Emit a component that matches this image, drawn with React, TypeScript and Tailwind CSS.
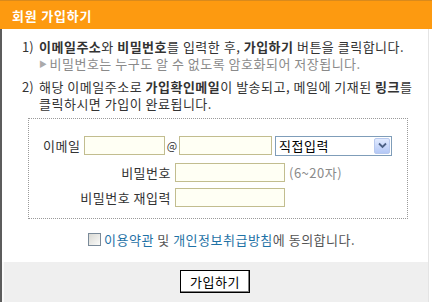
import React from 'react'

const font = { fontFamily: '"Noto Sans CJK KR", "Noto Sans", sans-serif' }

function Field({ className }: { className: string }) {
  return <div className={`h-[19px] border border-[#c2bd8f] bg-[#fffff4] ${className}`} />
}

export default function App() {
  return (
    <div style={font} className="w-[432px] h-[302px] bg-white flex flex-col text-[13px] leading-[17px] text-[#333] tracking-[0.5px]">
      {/* Header */}
      <div className="h-[29px] shrink-0 bg-[#fd9a10] border-t border-[#d98a1c] flex items-center pl-[12px]">
        <span className="text-white font-bold text-[13px] tracking-[0.8px]">회원 가입하기</span>
      </div>

      <div className="flex-1 flex flex-col border-l-2 border-[#5c5c5c] border-r border-r-[#e4e4e4] mr-[3px]">
        {/* Body */}
        <div className="flex-1 bg-white pt-[9px] pl-[20px]">
          <div className="flex">
            <span className="w-[17px] shrink-0 tracking-normal">1)</span>
            <div>
              <div>
                <b>이메일주소</b>와 <b>비밀번호</b>를 입력한 후, <b>가입하기</b> 버튼을 클릭합니다.
              </div>
              <div className="text-[#8a8a8a] flex items-center">
                <span className="text-[8px] text-[#aaa] mr-[2px]">▶</span>
                비밀번호는 누구도 알 수 없도록 암호화되어 저장됩니다.
              </div>
            </div>
          </div>
          <div className="flex mt-[6px]">
            <span className="w-[17px] shrink-0 tracking-normal">2)</span>
            <div>
              <div>
                해당 이메일주소로 <b>가입확인메일</b>이 발송되고, 메일에 기재된 <b>링크</b>를
              </div>
              <div>클릭하시면 가입이 완료됩니다.</div>
            </div>
          </div>

          {/* Form box */}
          <div className="ml-[6px] mt-[6px] w-[380px] h-[101px] border border-dotted border-[#9a9a9a] pt-[17px]">
            <div className="flex items-center h-[19px]">
              <span className="ml-[14px] w-[41px]">이메일</span>
              <Field className="w-[81px]" />
              <span className="w-[14px] text-center text-[11px] tracking-normal">@</span>
              <Field className="w-[93px]" />
              <div className="ml-[3px] w-[117px] h-[20px] border border-[#7f9db9] bg-white flex items-center">
                <span className="flex-1 pl-[3px] text-black">직접입력</span>
                <div className="w-[16px] h-[16px] mr-[1px] rounded-[2px] border border-[#b8c9ee] bg-gradient-to-b from-[#e1eafe] to-[#b4c8f6] flex items-center justify-center">
                  <svg width="9" height="7" viewBox="0 0 9 7">
                    <path d="M1 1.5 L4.5 5 L8 1.5" stroke="#4d6185" strokeWidth="1.8" fill="none" />
                  </svg>
                </div>
              </div>
            </div>
            <div className="flex items-center h-[19px] mt-[8px]">
              <span className="w-[146px] text-right pr-[4px]">비밀번호</span>
              <Field className="w-[110px]" />
              <span className="ml-[4px] text-[#8a8a8a]">(6~20자)</span>
            </div>
            <div className="flex items-center h-[19px] mt-[6px]">
              <span className="w-[146px] text-right pr-[4px]">비밀번호 재입력</span>
              <Field className="w-[110px]" />
            </div>
          </div>

          {/* Agreement */}
          <div className="flex items-center mt-[12px] pl-[66px]">
            <div className="w-[13px] h-[13px] border border-[#7a8a99] bg-gradient-to-br from-[#d9d9d4] to-[#fbfbf9] mr-[3px]" />
            <span className="text-[#1f72a6]">이용약관</span>
            <span className="text-[#555]">&nbsp;및&nbsp;</span>
            <span className="text-[#1f72a6]">개인정보취급방침</span>
            <span className="text-[#555]">에 동의합니다.</span>
          </div>
        </div>

        {/* Footer */}
        <div className="h-[40px] shrink-0 bg-[#efefef] border-l-2 border-[#fafafa] flex items-start justify-center pt-[8px] pr-[2px]">
          <button className="w-[70px] h-[23px] border border-black bg-white text-black text-[13px] shadow-[inset_-1px_-1px_0_#808080,inset_1px_1px_0_#ffffff]">
            가입하기
          </button>
        </div>
      </div>
    </div>
  )
}
